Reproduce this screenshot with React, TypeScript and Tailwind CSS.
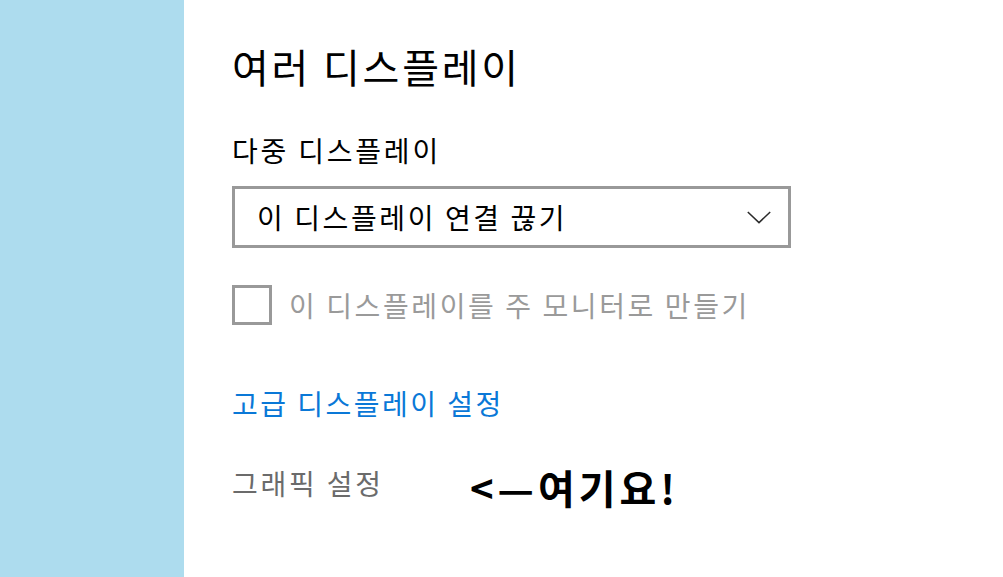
import React from 'react';

const KR = { fontFamily: '"Noto Sans CJK KR", "Noto Sans", sans-serif' };

export default function App() {
  return (
    <div className="flex w-[1003px] h-[577px] overflow-hidden bg-white" style={KR}>
      <div className="w-[184px] shrink-0 bg-[#addcee]" />
      <div className="flex flex-col pl-[48px] pt-[40px]">
        <h1 className="text-[40px] leading-[52px] tracking-[2.8px] text-black font-normal">여러 디스플레이</h1>

        <div className="mt-[40px] text-[28px] leading-[36px] tracking-[2.8px] text-black">다중 디스플레이</div>

        <button className="mt-[18px] flex items-center justify-between w-[559px] h-[62px] border-[3px] border-[#999999] bg-white pl-[22px] pr-[17px]">
          <span className="text-[28px] leading-[36px] tracking-[2.6px] text-black">이 디스플레이 연결 끊기</span>
          <svg width="24" height="13" viewBox="0 0 24 13" fill="none">
            <path d="M0.8 1 L12 11.6 L23.2 1" stroke="#2b2b2b" strokeWidth="1.5" />
          </svg>
        </button>

        <label className="mt-[37px] flex items-center gap-[17px]">
          <span className="w-[40px] h-[40px] border-[3px] border-[#999999] bg-white" />
          <span className="text-[28px] leading-[36px] tracking-[2.6px] text-[#9a9a9a]">이 디스플레이를 주 모니터로 만들기</span>
        </label>

        <a href="#" className="mt-[60px] text-[28px] leading-[36px] tracking-[2.5px] text-[#0a78d7]">고급 디스플레이 설정</a>

        <div className="mt-[44px] flex items-start">
          <span className="text-[28px] leading-[36px] tracking-[2.8px] text-[#6b6b6b] w-[238px]">그래픽 설정</span>
          <span className="text-[40px] leading-[44px] tracking-[4px] font-bold text-black">&lt;—여기요!</span>
        </div>
      </div>
    </div>
  );
}
